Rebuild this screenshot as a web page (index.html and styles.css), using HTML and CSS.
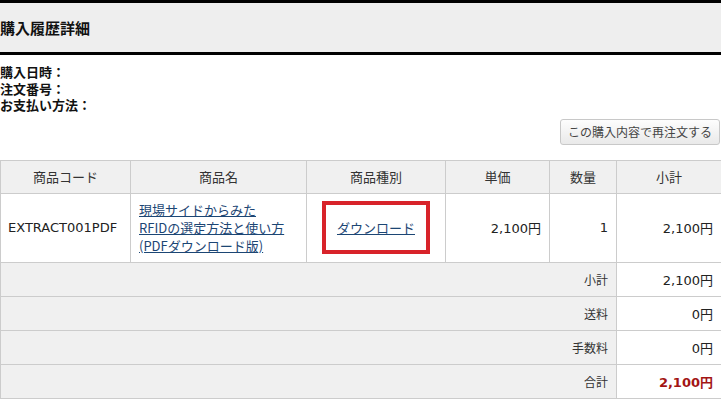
FILE: index.html
```html
<!DOCTYPE html>
<html lang="ja">
<head>
    <meta charset="UTF-8">
    <title>購入履歴詳細</title>
    <link rel="stylesheet" href="styles.css">
</head>
<body>
    <header class="page-head">
        <h1>購入履歴詳細</h1>
    </header>

    <dl class="order-info">
        <div><dt>購入日時：</dt><dd></dd></div>
        <div><dt>注文番号：</dt><dd></dd></div>
        <div><dt>お支払い方法：</dt><dd></dd></div>
    </dl>

    <div class="actions">
        <button type="button" class="reorder">この購入内容で再注文する</button>
    </div>

    <table class="order-table">
        <colgroup>
            <col class="c-code">
            <col class="c-name">
            <col class="c-type">
            <col class="c-price">
            <col class="c-qty">
            <col class="c-sub">
        </colgroup>
        <thead>
            <tr>
                <th>商品コード</th>
                <th>商品名</th>
                <th>商品種別</th>
                <th>単価</th>
                <th>数量</th>
                <th>小計</th>
            </tr>
        </thead>
        <tbody>
            <tr class="item">
                <td>EXTRACT001PDF</td>
                <td class="name"><a href="#">現場サイドからみた<br>RFIDの選定方法と使い方<br>(PDFダウンロード版)</a></td>
                <td class="type"><span class="mark"><a href="#">ダウンロード</a></span></td>
                <td class="num">2,100円</td>
                <td class="num">1</td>
                <td class="num">2,100円</td>
            </tr>
            <tr class="sum">
                <td colspan="5">小計</td>
                <td class="num">2,100円</td>
            </tr>
            <tr class="sum">
                <td colspan="5">送料</td>
                <td class="num">0円</td>
            </tr>
            <tr class="sum">
                <td colspan="5">手数料</td>
                <td class="num">0円</td>
            </tr>
            <tr class="sum total">
                <td colspan="5">合計</td>
                <td class="num">2,100円</td>
            </tr>
        </tbody>
    </table>
</body>
</html>
```

FILE: styles.css
```css
body {
    margin: 0;
    font-family: "DejaVu Sans", "Noto Sans CJK JP", sans-serif;
    font-size: 13px;
    color: #222;
    background: #fff;
}

.page-head {
    background: #eeeeee;
    border-top: 3px solid #000;
    border-bottom: 3px solid #000;
    height: 49px;
    display: flex;
    align-items: center;
}

.page-head h1 {
    margin: 0;
    font-size: 15px;
    font-weight: bold;
    color: #111;
}

.order-info {
    margin: 10px 0 0;
    font-size: 13px;
    font-weight: bold;
    line-height: 16.5px;
    color: #111;
}

.order-info div {
    display: flex;
}

.order-info dt,
.order-info dd {
    margin: 0;
}

.actions {
    display: flex;
    justify-content: flex-end;
    padding-right: 1px;
    margin-top: 4px;
}

.reorder {
    width: 160px;
    height: 26px;
    font-family: "Noto Sans CJK JP", sans-serif;
    font-size: 12px;
    color: #444;
    background: linear-gradient(#fdfdfd, #e9e9e9);
    border: 1px solid #c8c8c8;
    border-radius: 3px;
    cursor: pointer;
}

.order-table {
    margin-top: 15px;
    width: 721px;
    border-collapse: collapse;
    table-layout: fixed;
}

.c-code { width: 130px; }
.c-name { width: 176px; }
.c-type { width: 139px; }
.c-price { width: 104px; }
.c-qty { width: 67px; }
.c-sub { width: 105px; }

.order-table th,
.order-table td {
    border: 1px solid #cccccc;
    padding: 0 8px;
}

.order-table th {
    height: 32px;
    background: #f0f0f0;
    font-weight: normal;
    color: #333;
    font-family: "Noto Sans CJK JP", sans-serif;
}

.item td {
    height: 68px;
    background: #fff;
}

.item td:first-child {
    padding-left: 7px;
}

.order-table a {
    color: #1c4674;
    text-decoration: underline;
}

.name {
    line-height: 18px;
    font-family: "Noto Sans CJK JP", sans-serif;
}

.type {
    text-align: center;
    padding: 0;
}

.mark {
    display: inline-block;
    width: 100px;
    padding: 13px 0;
    border: 4px solid #d8232a;
    font-family: "Noto Sans CJK JP", sans-serif;
}

.num {
    text-align: right;
}

.sum td {
    height: 33px;
    text-align: right;
}

.sum td:first-child {
    background: #f0f0f0;
    font-family: "Noto Sans CJK JP", sans-serif;
    color: #333;
    font-size: 12px;
}

.total .num {
    color: #a31515;
    font-weight: bold;
}
```
